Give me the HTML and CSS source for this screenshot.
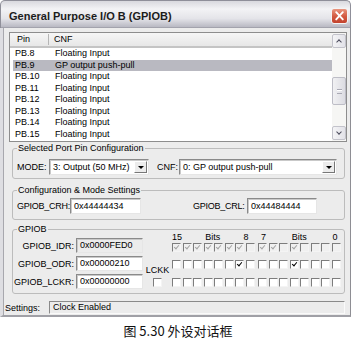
FILE: index.html
```html
<!DOCTYPE html>
<html><head><meta charset="utf-8"><link rel="stylesheet" href="styles.css"></head>
<body>
<div class="window">
 <div class="titlebar">
  <span class="title">General Purpose I/O B (GPIOB)</span>
  <span class="close"><svg width="17" height="16" viewBox="0 0 17 16"><path d="M5.2 4.2l6.6 7.2M11.8 4.2l-6.6 7.2" stroke="#fff" stroke-width="1.9" stroke-linecap="round"/></svg></span>
 </div>
 <div class="client">
  <div class="list">
   <div class="list-main">
    <div class="list-head"><span class="h-pin">Pin</span><span class="h-cnf">CNF</span></div>
    <div class="row"><span class="c-pin">PB.8</span><span class="c-cnf">Floating Input</span></div>
    <div class="row sel"><span class="c-pin">PB.9</span><span class="c-cnf">GP output push-pull</span></div>
    <div class="row"><span class="c-pin">PB.10</span><span class="c-cnf">Floating Input</span></div>
    <div class="row"><span class="c-pin">PB.11</span><span class="c-cnf">Floating Input</span></div>
    <div class="row"><span class="c-pin">PB.12</span><span class="c-cnf">Floating Input</span></div>
    <div class="row"><span class="c-pin">PB.13</span><span class="c-cnf">Floating Input</span></div>
    <div class="row"><span class="c-pin">PB.14</span><span class="c-cnf">Floating Input</span></div>
    <div class="row"><span class="c-pin">PB.15</span><span class="c-cnf">Floating Input</span></div>
   </div>
   <div class="vscroll">
    <div class="sb-btn up"><i></i></div>
    <div class="sb-track"><div class="sb-thumb"><i></i></div></div>
    <div class="sb-btn down"><i></i></div>
   </div>
  </div>

  <fieldset class="group g-pin">
   <legend>Selected Port Pin Configuration</legend>
   <div class="pin-row">
    <span class="lbl-mode">MODE:</span>
    <div class="combo combo-mode"><span>3: Output (50 MHz)</span><i class="drop"></i></div>
    <span class="lbl-cnf">CNF:</span>
    <div class="combo combo-cnf"><span>0: GP output push-pull</span><i class="drop"></i></div>
   </div>
  </fieldset>

  <fieldset class="group g-mode">
   <legend>Configuration &amp; Mode Settings</legend>
   <div class="mode-row">
    <span class="lbl-crh">GPIOB_CRH:</span><span class="edit edit-crh">0x44444434</span>
    <span class="lbl-crl">GPIOB_CRL:</span><span class="edit edit-crl">0x44484444</span>
   </div>
  </fieldset>

  <fieldset class="group g-port">
   <legend>GPIOB</legend>
   <div class="port">
    <div class="regs">
     <span class="reg-lbl">GPIOB_IDR:</span><span class="edit ro">0x0000FED0</span>
     <span class="reg-lbl">GPIOB_ODR:</span><span class="edit">0x00000210</span>
     <span class="reg-lbl">GPIOB_LCKR:</span><span class="edit">0x00000000</span>
    </div>
    <div class="lckk"><span>LCKK</span><span class="cb"></span></div>
    <div class="bits">
     <div class="bit-row head">
      <div class="set hi"><span>15</span><span>Bits</span><span>8</span></div>
      <div class="set lo"><span>7</span><span>Bits</span><span>0</span></div>
     </div>
     <div class="bit-row r-idr">
      <div class="set"><span class="cb dis on"></span><span class="cb dis on"></span><span class="cb dis on"></span><span class="cb dis on"></span><span class="cb dis on"></span><span class="cb dis on"></span><span class="cb dis on"></span><span class="cb dis"></span></div>
      <div class="set"><span class="cb dis on"></span><span class="cb dis on"></span><span class="cb dis"></span><span class="cb dis on"></span><span class="cb dis"></span><span class="cb dis"></span><span class="cb dis"></span><span class="cb dis"></span></div>
     </div>
     <div class="bit-row r-odr">
      <div class="set"><span class="cb"></span><span class="cb"></span><span class="cb"></span><span class="cb"></span><span class="cb"></span><span class="cb"></span><span class="cb on"></span><span class="cb"></span></div>
      <div class="set"><span class="cb"></span><span class="cb"></span><span class="cb"></span><span class="cb on"></span><span class="cb"></span><span class="cb"></span><span class="cb"></span><span class="cb"></span></div>
     </div>
     <div class="bit-row r-lckr">
      <div class="set"><span class="cb"></span><span class="cb"></span><span class="cb"></span><span class="cb"></span><span class="cb"></span><span class="cb"></span><span class="cb"></span><span class="cb"></span></div>
      <div class="set"><span class="cb"></span><span class="cb"></span><span class="cb"></span><span class="cb"></span><span class="cb"></span><span class="cb"></span><span class="cb"></span><span class="cb"></span></div>
     </div>
    </div>
   </div>
  </fieldset>

  <div class="settings">
   <span class="lbl-set">Settings:</span><span class="status">Clock Enabled</span>
  </div>
 </div>
</div>
<div class="caption">图 5.30 外设对话框</div>
</body></html>
```

FILE: styles.css
```css
* {box-sizing: border-box;}
body {margin: 0; background: #fff; font-family: "Liberation Sans", Arial, sans-serif; font-size: 9px; color: #000;}

.window {width: 351px; height: 317px; display: flex; flex-direction: column;}
.titlebar {height: 28px; display: flex; align-items: flex-start; padding-left: 8px;
  background: linear-gradient(#d9d9de 0, #f3f3f5 30%, #e4e4e9 65%, #b9b9c3 96%, #8f8f99 100%);
  border-radius: 5px 5px 0 0; border: 1px solid #8f8f99; border-bottom: 0;}
.title {margin-top: 9px; font-size: 11px; font-weight: bold; line-height: 13px; color: #1c1c1c;}
.close {margin-left: auto; margin-right: 2px; margin-top: 7px; width: 17px; height: 16px; display: flex;
  border-radius: 3px; border: 1px solid #f4f4f4; background: linear-gradient(#e9957f, #d2583f 55%, #c2432e);}
.close svg {margin: -1px;}

.client {flex: 1; display: flex; flex-direction: column; padding: 0 4px 0 2px;
  background: #ececec; border-left: 3px solid #dedee2; border-right: 1px solid #8e8e94; border-bottom: 2px solid #a0a0a6;
  box-shadow: inset 1px 0 0 #a8a8ae;}

/* list view */
.list {margin: 4px -1px 0 4px; height: 110px; border: 1px solid #8d8d8d; background: #fff; display: flex;}
.list-main {flex: 1; padding-left: 0;}
.list-head {height: 15px; display: flex; align-items: center; border-bottom: 2px solid #c4c4c4;
  background: linear-gradient(#f6f6f6, #e7e7e7);}
.h-pin {width: 39px; padding-left: 7px; border-right: 1px solid #b5b5b5; height: 11px; line-height: 11px;}
.h-cnf {padding-left: 5px; line-height: 11px;}
.row {height: 11.5px; line-height: 11.5px; margin-left: 3px; display: flex; white-space: nowrap;}
.row.sel {background: #b9b9c1;}
.c-pin {width: 36px; padding-left: 2px;}
.c-cnf {padding-left: 6px;}

.vscroll {width: 14px; display: flex; flex-direction: column; padding: 1px 0; background: #f6f6f4;}
.sb-btn {height: 14px; border: 1px solid #c3c3cb; border-radius: 2px; background: linear-gradient(90deg, #f4f4f6, #e2e2e8);
  display: flex; align-items: center; justify-content: center;}
.sb-btn i {width: 4px; height: 4px; border: solid #4b4b5c; border-width: 1.5px 0 0 1.5px;}
.sb-btn.up i {transform: rotate(45deg); margin-top: 2px;}
.sb-btn.down i {transform: rotate(225deg); margin-top: -2px;}
.sb-track {flex: 1;}
.sb-thumb {margin-top: 29px; height: 28px; border: 1px solid #bdbdc6; border-radius: 2px;
  background: linear-gradient(90deg, #f1f1f3, #dcdce2); display: flex; align-items: center; justify-content: center;}
.sb-thumb i {width: 5px; height: 5px; border-top: 1px solid #a9a9b4; border-bottom: 1px solid #a9a9b4; box-shadow: inset 0 1px 0 #fff;}

/* group boxes */
.group {margin: 1px 1px 0 7px; padding: 5px 4px 3px 4px; min-width: 0; border: 1px solid #bcbcbc; border-radius: 3px;}
.group legend {padding: 0 1px; line-height: 11px;}
.g-mode {margin-top: 6px; padding: 2px 4px 5px 4px;}
.g-port {margin-top: 4px; padding: 3px 0 4px 1px;}
.g-port legend {margin-left: 3px;}

.pin-row, .mode-row {display: flex; align-items: center;}
.lbl-mode {width: 32px;}
.lbl-cnf {width: 22px; margin-left: 8px;}
.combo {height: 16px; display: flex; align-items: center; background: #fff; padding-left: 3px;
  border: 1px solid; border-color: #8a8a8a #e6e6e6 #e6e6e6 #8a8a8a; box-shadow: inset 1px 1px 0 #c9c9c9;}
.combo span {flex: 1; white-space: nowrap;}
.combo-mode {width: 100px;}
.combo-cnf {width: 158px;}
.drop {width: 13px; height: 12px; margin-right: 1px; background: #ececec; display: flex; align-items: center; justify-content: center;
  border: 1px solid; border-color: #fff #777 #777 #fff;}
.drop::after {content: ""; border: 3px solid transparent; border-top: 3px solid #000; border-bottom: 0;}

.edit {height: 15px; line-height: 13px; padding-left: 3px; background: #fff; white-space: nowrap;
  border: 1px solid; border-color: #8a8a8a #e6e6e6 #e6e6e6 #8a8a8a; box-shadow: inset 1px 1px 0 #c9c9c9;}
.edit.ro {background: #ececec;}
.lbl-crh {width: 53px; letter-spacing: -0.25px; white-space: nowrap;}
.edit-crh {width: 71px; height: 16px; line-height: 14px;}
.lbl-crl {width: 54px; margin-left: 52px; letter-spacing: -0.25px; white-space: nowrap;}
.edit-crl {width: 70px; height: 16px; line-height: 14px;}

.port {display: flex;}
.regs {display: grid; grid-template-columns: 60px 67px; grid-auto-rows: 15px; column-gap: 2px; row-gap: 3px; align-items: center;}
.reg-lbl {text-align: right; white-space: nowrap;}
.lckk {width: 29px; display: flex; flex-direction: column; align-items: center; justify-content: flex-end; gap: 3px; padding-bottom: 2px;}
.lckk span:first-child {line-height: 10px;}

.bits {display: flex; flex-direction: column; margin-top: -6px;}
.bit-row {display: flex; gap: 3.5px;}
.set {display: flex; gap: 1.5px; width: 82.5px;}
.head {height: 11px;}
.head .set {justify-content: space-between; line-height: 10px;}
.head .hi {padding: 0 6px 0 0;}
.head .lo {padding: 0 3px 0 3px;}
.r-odr {margin-top: 8px;}
.r-lckr {margin-top: 9px;}

.cb {width: 9px; height: 9px; display: flex; align-items: center; justify-content: center; background: #fff;
  border: 1px solid; border-color: #7d7d7d #f4f4f4 #f4f4f4 #7d7d7d;}
.cb.dis {background: #f0f0f0;}
.cb.on::after {content: ""; width: 2px; height: 4px; margin-top: -2px; border: solid #000; border-width: 0 1.5px 1.5px 0; transform: rotate(40deg);}
.cb.dis.on::after {border-color: #a4a4a4;}

.settings {display: flex; align-items: center; margin-top: 7px;}
.lbl-set {width: 44px;}
.status {flex: 1; margin-right: 1px; height: 13px; line-height: 11px; padding-left: 3px; background: #ececec;
  border: 1px solid; border-color: #8a8a8a #fafafa #fafafa #8a8a8a;}

.caption {width: 356px; text-align: center; margin-top: 6px; font-family: "Noto Sans CJK SC", sans-serif; font-size: 13px; line-height: 16px; color: #111;}
```
